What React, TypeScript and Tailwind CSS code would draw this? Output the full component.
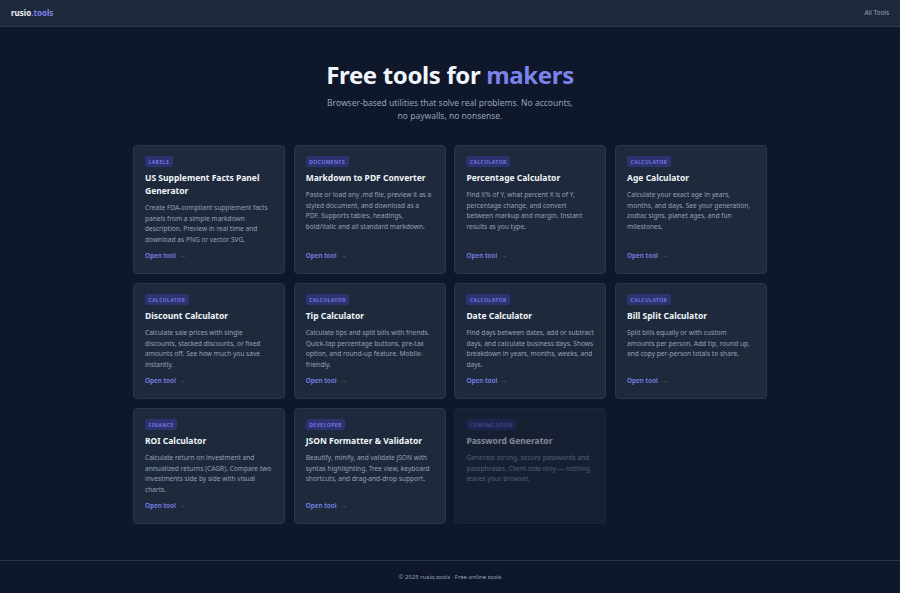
const cards = [
  { tag: "LABELS", title: "US Supplement Facts Panel Generator", desc: "Create FDA-compliant supplement facts panels from a simple markdown description. Preview in real time and download as PNG or vector SVG." },
  { tag: "DOCUMENTS", title: "Markdown to PDF Converter", desc: "Paste or load any .md file, preview it as a styled document, and download as a PDF. Supports tables, headings, bold/italic and all standard markdown." },
  { tag: "CALCULATOR", title: "Percentage Calculator", desc: "Find X% of Y, what percent X is of Y, percentage change, and convert between markup and margin. Instant results as you type." },
  { tag: "CALCULATOR", title: "Age Calculator", desc: "Calculate your exact age in years, months, and days. See your generation, zodiac signs, planet ages, and fun milestones." },
  { tag: "CALCULATOR", title: "Discount Calculator", desc: "Calculate sale prices with single discounts, stacked discounts, or fixed amounts off. See how much you save instantly." },
  { tag: "CALCULATOR", title: "Tip Calculator", desc: "Calculate tips and split bills with friends. Quick-tap percentage buttons, pre-tax option, and round-up feature. Mobile-friendly." },
  { tag: "CALCULATOR", title: "Date Calculator", desc: "Find days between dates, add or subtract days, and calculate business days. Shows breakdown in years, months, weeks, and days." },
  { tag: "CALCULATOR", title: "Bill Split Calculator", desc: "Split bills equally or with custom amounts per person. Add tip, round up, and copy per-person totals to share." },
  { tag: "FINANCE", title: "ROI Calculator", desc: "Calculate return on investment and annualized returns (CAGR). Compare two investments side by side with visual charts." },
  { tag: "DEVELOPER", title: "JSON Formatter & Validator", desc: "Beautify, minify, and validate JSON with syntax highlighting. Tree view, keyboard shortcuts, and drag-and-drop support." },
  { tag: "COMING SOON", title: "Password Generator", desc: "Generate strong, secure passwords and passphrases. Client-side only — nothing leaves your browser.", soon: true },
];

export default function App() {
  return (
    <div className="flex min-h-[593px] flex-col bg-[#0f172a] font-['Noto_Sans',sans-serif] antialiased">
      <header className="flex h-[27px] items-center justify-between border-b border-[#2b3648] bg-[#1e293b] px-[11px]">
        <div className="text-[8px] font-bold text-[#f1f5f9]">rusio<span className="text-[#7c83ea]">.tools</span></div>
        <div className="text-[6.4px] text-[#94a3b8]">All Tools</div>
      </header>
      <main className="flex-1">
        <section className="pt-[32.5px] text-center">
          <h1 className="text-[24px] font-bold leading-[29px] tracking-[-0.36px] text-[#f1f5f9]">Free tools for <span className="text-[#7c83ea]">makers</span></h1>
          <p className="mx-auto mt-[7px] w-[250px] text-[8.5px] leading-[13.5px] text-[#94a3b8]">Browser-based utilities that solve real problems. No accounts, no paywalls, no nonsense.</p>
        </section>
        <div className="mx-auto mt-[22.5px] grid w-[634px] grid-cols-4 gap-x-[8.8px] gap-y-[9px]">
          {cards.map((c) => (
            <div key={c.title} className={`flex flex-col rounded-[4px] border border-[#2b3648] bg-[#1e293b] px-[11px] pb-[12px] pt-[10px] ${c.soon ? "opacity-50" : ""}`}>
              <span className="self-start rounded-[2px] bg-[#2d3270] px-[3.5px] py-[1.5px] text-[5px] font-semibold leading-[8px] tracking-[0.5px] text-[#7c83ea]">{c.tag}</span>
              <h2 className="mt-[4px] text-[8.5px] font-bold leading-[13px] text-[#f1f5f9]">{c.title}</h2>
              <p className="mt-[6px] flex-1 text-[6.6px] leading-[10.5px] text-[#94a3b8]">{c.desc}</p>
              {!c.soon && (
                <div className="mt-[6px] text-[6.4px] font-semibold leading-[10px] text-[#7c83ea]">Open tool <span className="ml-[2px] text-[#64748b]">→</span></div>
              )}
            </div>
          ))}
        </div>
      </main>
      <footer className="flex h-[33px] items-center justify-center border-t border-[#2b3648] text-[6px] text-[#94a3b8]">© 2025 rusio.tools · Free online tools</footer>
    </div>
  );
}
